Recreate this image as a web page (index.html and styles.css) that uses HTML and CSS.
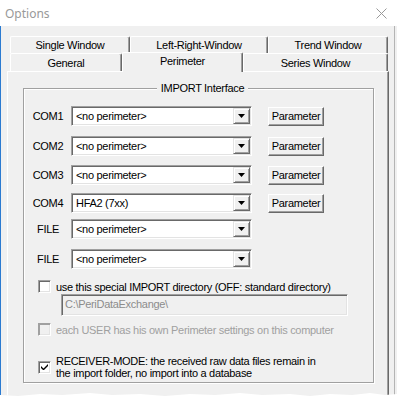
FILE: index.html
```html
<!DOCTYPE html>
<html lang="en">

<head>
    <meta charset="UTF-8" />
    <title>Options</title>
    <link rel="stylesheet" href="styles.css">
</head>

<body>
    <div class="window">
        <div class="titlebar">
            <span class="title">Options</span>
            <svg class="close" width="11" height="11" viewBox="0 0 11 11">
                <path d="M0.5 0.5L10.5 10.5M10.5 0.5L0.5 10.5" stroke="#999" stroke-width="1" fill="none" />
            </svg>
        </div>
        <div class="dialog">
            <!-- two rows of tabs, the front row holds the selected one -->
            <div class="tab-row back">
                <div class="tab t-single">Single Window</div>
                <div class="tab t-leftright">Left-Right-Window</div>
                <div class="tab t-trend">Trend Window</div>
            </div>
            <div class="tab-row front">
                <div class="tab t-general">General</div>
                <div class="tab t-perimeter active">Perimeter</div>
                <div class="tab t-series">Series Window</div>
            </div>
            <div class="tab-panel">
                <fieldset class="group">
                    <legend>IMPORT Interface</legend>

                    <div class="row">
                        <span class="port">COM1</span>
                        <div class="combo"><span class="combo-text">&lt;no perimeter&gt;</span><span class="combo-btn"><svg width="7" height="4" viewBox="0 0 7 4"><path d="M0 0H7L3.5 4Z" fill="#000" /></svg></span></div>
                        <button class="btn">Parameter</button>
                    </div>
                    <div class="row r2">
                        <span class="port">COM2</span>
                        <div class="combo"><span class="combo-text">&lt;no perimeter&gt;</span><span class="combo-btn"><svg width="7" height="4" viewBox="0 0 7 4"><path d="M0 0H7L3.5 4Z" fill="#000" /></svg></span></div>
                        <button class="btn">Parameter</button>
                    </div>
                    <div class="row r3">
                        <span class="port">COM3</span>
                        <div class="combo"><span class="combo-text">&lt;no perimeter&gt;</span><span class="combo-btn"><svg width="7" height="4" viewBox="0 0 7 4"><path d="M0 0H7L3.5 4Z" fill="#000" /></svg></span></div>
                        <button class="btn">Parameter</button>
                    </div>
                    <div class="row r4">
                        <span class="port">COM4</span>
                        <div class="combo"><span class="combo-text">HFA2 (7xx)</span><span class="combo-btn"><svg width="7" height="4" viewBox="0 0 7 4"><path d="M0 0H7L3.5 4Z" fill="#000" /></svg></span></div>
                        <button class="btn">Parameter</button>
                    </div>
                    <div class="row r5">
                        <span class="port">FILE</span>
                        <div class="combo"><span class="combo-text">&lt;no perimeter&gt;</span><span class="combo-btn"><svg width="7" height="4" viewBox="0 0 7 4"><path d="M0 0H7L3.5 4Z" fill="#000" /></svg></span></div>
                    </div>
                    <div class="row r6">
                        <span class="port">FILE</span>
                        <div class="combo"><span class="combo-text">&lt;no perimeter&gt;</span><span class="combo-btn"><svg width="7" height="4" viewBox="0 0 7 4"><path d="M0 0H7L3.5 4Z" fill="#000" /></svg></span></div>
                    </div>

                    <label class="option opt-dir">
                        <span class="check"></span>
                        <span>use this special IMPORT directory (OFF: standard directory)</span>
                    </label>
                    <div class="path-field">C:\PeriDataExchange\</div>

                    <label class="option opt-user disabled">
                        <span class="check"></span>
                        <span>each USER has his own Perimeter settings on this computer</span>
                    </label>

                    <label class="option opt-receiver">
                        <span class="check checked"><svg width="7" height="7" viewBox="0 0 7 7"><path d="M0 2V4L2 6H3L7 2V0L2.5 4.5Z" fill="#000" /></svg></span>
                        <span>RECEIVER-MODE: the received raw data files remain in<br>the import folder, no import into a database</span>
                    </label>
                </fieldset>
            </div>
        </div>
    </div>
</body>

</html>
```

FILE: styles.css
```css
body {
    margin: 0;
    background: #fff;
    font-family: 'Liberation Sans', Arial, sans-serif;
    font-size: 11px;
    letter-spacing: -0.3px;
    color: #000;
}

.window {
    width: 397px;
    height: 398px;
    background: #f0f0f0;
    overflow: hidden;
    /* torn-off bottom edge of the screenshot */
    clip-path: polygon(0 0, 100% 0, 100% 394px, 385px 395px, 370px 393px, 352px 395px, 330px 394px, 310px 396px, 290px 394px, 262px 395px, 240px 393px, 215px 395px, 190px 394px, 165px 396px, 140px 394px, 112px 395px, 90px 393px, 62px 395px, 40px 394px, 18px 396px, 0 395px);
}

.titlebar {
    height: 26px;
    background: #fff;
    display: flex;
    align-items: center;
    justify-content: space-between;
    padding: 0 10px 0 5px;
}

.title {
    font-family: 'Noto Sans', sans-serif;
    font-size: 12px;
    letter-spacing: 0;
    color: #999;
}

.close {
    display: block;
    margin-top: 1px;
}

.dialog {
    width: 395px;
    box-sizing: border-box;
    border-left: 1px solid #2b7bd1;
    border-right: 1px solid #b4b4b4;
    padding: 10px 0 0 6px;
    height: 400px;
}

/* Tabs */
.tab-row {
    display: flex;
    margin-left: 3px;
}

.tab-row.back {
    height: 17px;
}

.tab-row.front {
    height: 18px;
}

.tab {
    box-sizing: border-box;
    border: 1px solid #fff;
    border-bottom: none;
    border-right-color: #696969;
    border-radius: 2px 2px 0 0;
    box-shadow: inset -1px 0 #a0a0a0;
    background: #f0f0f0;
    text-align: center;
    line-height: 16px;
}

.front .tab {
    padding-top: 1px;
}

.t-single { width: 120px; }
.t-leftright { width: 138px; }
.t-trend { width: 120px; }
.t-general { width: 112px; }
.t-perimeter { width: 121px; }
.t-series { width: 145px; }

.tab.active {
    position: relative;
    z-index: 1;
    height: 20px;
    margin-top: -1px;
    padding-top: 0;
}

.tab-panel {
    width: 382px;
    height: 340px;
    box-sizing: border-box;
    border: 1px solid;
    border-color: #fff #696969 #696969 #fff;
    box-shadow: inset -1px -1px #a0a0a0;
    padding: 10px 0 0 15px;
}

/* Group box */
.group {
    width: 351px;
    height: 301px;
    box-sizing: border-box;
    margin: 0;
    padding: 11px 0 0 8px;
    border: 1px solid #a0a0a0;
    box-shadow: inset 1px 1px #fff, 1px 1px #fff;
}

.group legend {
    margin: 0 auto;
    padding: 0 4px;
    line-height: 13px;
    background: #f0f0f0;
}

.row {
    display: flex;
    align-items: center;
    height: 20px;
}

.r2 { margin-top: 10px; }
.r3 { margin-top: 9px; }
.r4 { margin-top: 8px; }
.r5 { margin-top: 6px; }
.r6 { margin-top: 10px; }

.port {
    width: 32px;
    margin-right: 7px;
    text-align: center;
}

.combo {
    width: 181px;
    height: 20px;
    box-sizing: border-box;
    display: flex;
    align-items: center;
    justify-content: space-between;
    background: #fff;
    border: 1px solid;
    border-color: #a0a0a0 #fff #fff #a0a0a0;
    box-shadow: inset 1px 1px #696969, inset -1px -1px #e3e3e3;
    padding: 1px;
}

.combo-text {
    padding-left: 3px;
}

.combo-btn {
    width: 17px;
    height: 16px;
    box-sizing: border-box;
    display: flex;
    align-items: center;
    justify-content: center;
    background: #f0f0f0;
    border: 1px solid;
    border-color: #e3e3e3 #696969 #696969 #e3e3e3;
    box-shadow: inset 1px 1px #fff, inset -1px -1px #a0a0a0;
}

.combo-btn svg {
    display: block;
}

.btn {
    width: 56px;
    height: 19px;
    margin-left: 16px;
    padding: 0;
    box-sizing: border-box;
    font: inherit;
    letter-spacing: inherit;
    color: #000;
    background: #f0f0f0;
    border: 1px solid;
    border-color: #fff #696969 #696969 #fff;
    box-shadow: inset -1px -1px #a0a0a0;
}

/* Checkbox options */
.option {
    display: flex;
    align-items: center;
    margin-left: 6px;
    line-height: 12px;
}

.check {
    width: 13px;
    height: 13px;
    flex-shrink: 0;
    box-sizing: border-box;
    margin-right: 5px;
    display: flex;
    align-items: center;
    justify-content: center;
    background: #fff;
    border: 1px solid;
    border-color: #a0a0a0 #fff #fff #a0a0a0;
    box-shadow: inset 1px 1px #696969, inset -1px -1px #e3e3e3;
}

.check svg {
    display: block;
}

.opt-dir {
    margin-top: 11px;
}

.path-field {
    width: 287px;
    height: 22px;
    box-sizing: border-box;
    margin: 1px 0 0 29px;
    padding-left: 3px;
    line-height: 18px;
    color: #8c8c8c;
    border: 1px solid;
    border-color: #a0a0a0 #fff #fff #a0a0a0;
    box-shadow: inset 1px 1px #696969, inset -1px -1px #e3e3e3;
}

.opt-user {
    margin-top: 7px;
}

.disabled {
    color: #a0a0a0;
}

.disabled .check {
    background: #f0f0f0;
    box-shadow: inset 1px 1px #a0a0a0, inset -1px -1px #e3e3e3;
}

.opt-receiver {
    margin-top: 19px;
}
```
